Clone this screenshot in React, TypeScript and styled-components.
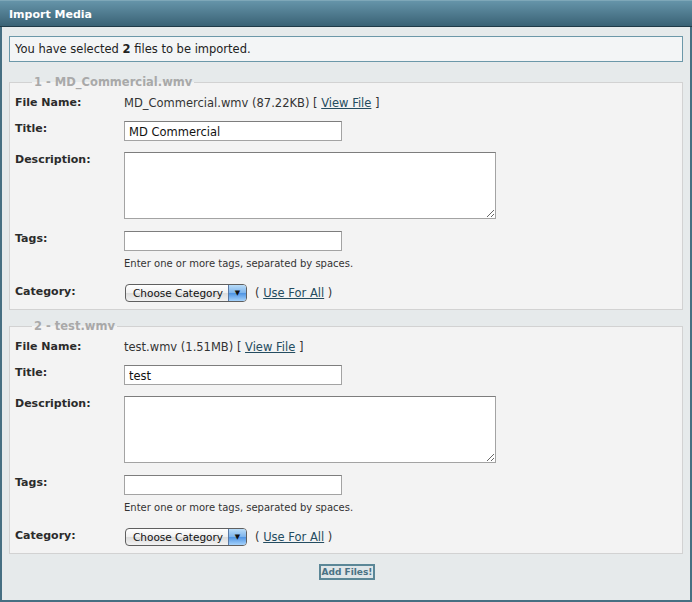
import React from 'react';
import styled, { createGlobalStyle } from 'styled-components';

const GlobalStyle = createGlobalStyle`
  html, body {
    margin: 0;
    padding: 0;
    background: #ffffff;
  }
  body {
    font-family: 'DejaVu Sans', Verdana, sans-serif;
  }
`;

const Window = styled.div`
  width: 692px;
  height: 602px;
  box-sizing: border-box;
  background: #e6eaeb;
  border: 2px solid #466f82;
  border-top: none;
  display: flex;
  flex-direction: column;
`;

const Header = styled.div`
  height: 27px;
  margin: 0 -2px;
  box-sizing: border-box;
  background: linear-gradient(#6594a9, #3a6275);
  border-top: 1px solid #7ea7b8;
  border-bottom: 1px solid #1f3a47;
  color: #ffffff;
  font-size: 11px;
  font-weight: bold;
  padding: 7px 0 0 9px;
`;

const Body = styled.div`
  padding: 9px 7px 0 7px;
  display: flex;
  flex-direction: column;
`;

const Notice = styled.div`
  height: 26px;
  box-sizing: border-box;
  border: 1px solid #6c98a9;
  background: #f3f5f6;
  font-size: 11.5px;
  color: #222;
  padding: 5px 0 0 5px;
  b {
    font-weight: bold;
  }
`;

const Group = styled.fieldset<{ $top: number }>`
  margin: ${(p) => p.$top}px 0 0 0;
  padding: 6px 5px 0 5px;
  border: 1px solid #d2d2d2;
  background: #f3f3f3;
  min-width: 0;
  legend {
    margin-left: 17px;
    padding: 0 2px;
    font-size: 11.5px;
    font-weight: bold;
    color: #a9a9a9;
  }
`;

const Row = styled.div<{ $gap?: number }>`
  display: flex;
  align-items: flex-start;
  margin-bottom: ${(p) => (p.$gap ?? 11)}px;
`;

const Label = styled.div`
  width: 109px;
  flex: none;
  font-size: 11px;
  font-weight: bold;
  color: #2b2b2b;
  padding-top: 1px;
`;

const Value = styled.div`
  font-size: 11.5px;
  color: #333;
  padding-top: 1px;
  a {
    color: #244c60;
    text-decoration: underline;
  }
`;

const TextInput = styled.input`
  width: 218px;
  height: 20px;
  box-sizing: border-box;
  border: 1px solid #a3a3a3;
  border-top-color: #7d7d7d;
  background: #fff;
  font-family: 'DejaVu Sans', Verdana, sans-serif;
  font-size: 11.5px;
  padding: 1px 4px 0 4px;
  margin: 0;
  color: #111;
  outline: none;
`;

const TextArea = styled.textarea`
  width: 372px;
  height: 67px;
  box-sizing: border-box;
  border: 1px solid #a3a3a3;
  border-top-color: #7d7d7d;
  background: #fff;
  margin: 0;
  padding: 2px;
  font-family: 'DejaVu Sans', Verdana, sans-serif;
  font-size: 11px;
  outline: none;
`;

const Hint = styled.div`
  margin: -4px 0 15px 109px;
  font-size: 10px;
  color: #333;
`;

const Controls = styled.div`
  display: flex;
  align-items: center;
  font-size: 11.5px;
  color: #333;
  gap: 8px;
  a {
    color: #244c60;
    text-decoration: underline;
  }
`;

const Select = styled.div`
  display: inline-flex;
  margin-left: 1px;
  width: 122px;
  height: 18px;
  box-sizing: border-box;
  border: 1px solid #5f5f5f;
  border-radius: 4px;
  overflow: hidden;
  background: linear-gradient(#ffffff, #f0f0f0 50%, #dcdcdc 51%, #f2f2f2);
  font-size: 10.5px;
  color: #111;
`;

const SelectText = styled.span`
  flex: 1;
  padding: 2px 0 0 7px;
  white-space: nowrap;
`;

const SelectArrow = styled.span`
  width: 17px;
  flex: none;
  border-left: 1px solid #5a79a4;
  background: linear-gradient(#b9dcf8, #7cb3ec 50%, #4d93e3 51%, #a5d2fb);
  display: flex;
  align-items: center;
  justify-content: center;
  font-size: 7px;
  color: #111;
`;

const Footer = styled.div`
  display: flex;
  justify-content: center;
  padding-top: 10px;
`;

const Button = styled.button`
  height: 16px;
  box-sizing: border-box;
  border: 2px solid #5b8797;
  background: #dfe6e9;
  color: #4b7284;
  font-family: 'DejaVu Sans', Verdana, sans-serif;
  font-size: 9px;
  font-weight: bold;
  padding: 0 1px;
  line-height: 11px;
  margin-left: 2px;
`;

type MediaFile = { name: string; size: string; title: string };

const files: MediaFile[] = [
  { name: 'MD_Commercial.wmv', size: '87.22KB', title: 'MD Commercial' },
  { name: 'test.wmv', size: '1.51MB', title: 'test' },
];

const FileGroup: React.FC<{ file: MediaFile; index: number }> = ({ file, index }) => (
  <Group $top={index === 1 ? 13 : 9}>
    <legend>
      {index} - {file.name}
    </legend>
    <Row $gap={11}>
      <Label>File Name:</Label>
      <Value>
        {file.name} ({file.size}) [ <a href="#">View File</a> ]
      </Value>
    </Row>
    <Row>
      <Label>Title:</Label>
      <TextInput defaultValue={file.title} />
    </Row>
    <Row $gap={12}>
      <Label>Description:</Label>
      <TextArea />
    </Row>
    <Row>
      <Label>Tags:</Label>
      <TextInput />
    </Row>
    <Hint>Enter one or more tags, separated by spaces.</Hint>
    <Row $gap={7}>
      <Label>Category:</Label>
      <Controls>
        <Select>
          <SelectText>Choose Category</SelectText>
          <SelectArrow>▼</SelectArrow>
        </Select>
        <span>
          ( <a href="#">Use For All</a> )
        </span>
      </Controls>
    </Row>
  </Group>
);

const App: React.FC = () => {
  return (
    <>
      <GlobalStyle />
      <Window>
        <Header>Import Media</Header>
        <Body>
          <Notice>
            You have selected <b>2</b> files to be imported.
          </Notice>
          {files.map((f, i) => (
            <FileGroup key={f.name} file={f} index={i + 1} />
          ))}
          <Footer>
            <Button>Add Files!</Button>
          </Footer>
        </Body>
      </Window>
    </>
  );
};

export default App;
